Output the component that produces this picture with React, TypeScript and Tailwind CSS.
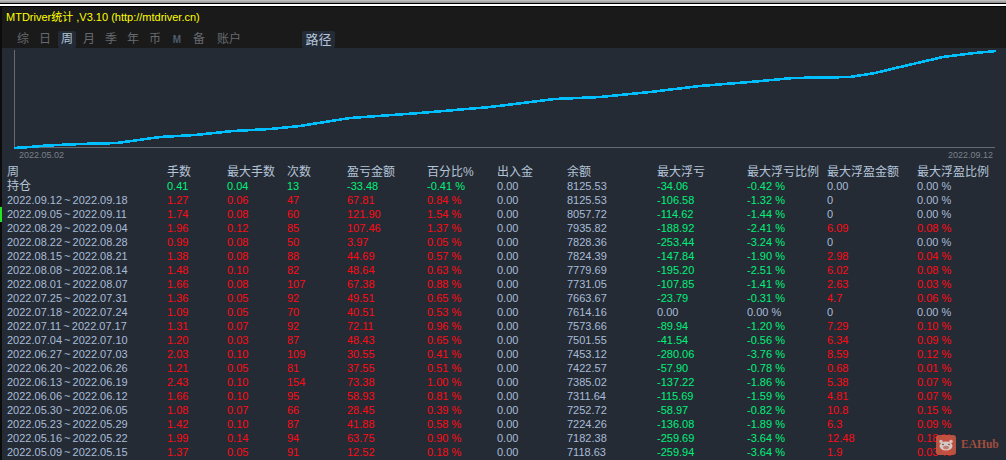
const F = "font-['Liberation_Sans','Noto_Sans_CJK_SC',sans-serif]";

const N = "text-[#a8bcd8]";
const R = "text-[#ff0a14]";
const G = "text-[#00f07a]";

const tabs = ["综", "日", "周", "月", "季", "年", "币", "M", "备"];

const headers = ["周", "手数", "最大手数", "次数", "盈亏金额", "百分比%", "出入金", "余额", "最大浮亏", "最大浮亏比例", "最大浮盈金额", "最大浮盈比例"];

const rows: string[][] = [
  ["2022.09.12 ~ 2022.09.18", "1.27", "0.06", "47", "67.81", "0.84 %", "0.00", "8125.53", "-106.58", "-1.32 %", "0", "0.00 %"],
  ["2022.09.05 ~ 2022.09.11", "1.74", "0.08", "60", "121.90", "1.54 %", "0.00", "8057.72", "-114.62", "-1.44 %", "0", "0.00 %"],
  ["2022.08.29 ~ 2022.09.04", "1.96", "0.12", "85", "107.46", "1.37 %", "0.00", "7935.82", "-188.92", "-2.41 %", "6.09", "0.08 %"],
  ["2022.08.22 ~ 2022.08.28", "0.99", "0.08", "50", "3.97", "0.05 %", "0.00", "7828.36", "-253.44", "-3.24 %", "0", "0.00 %"],
  ["2022.08.15 ~ 2022.08.21", "1.38", "0.08", "88", "44.69", "0.57 %", "0.00", "7824.39", "-147.84", "-1.90 %", "2.98", "0.04 %"],
  ["2022.08.08 ~ 2022.08.14", "1.48", "0.10", "82", "48.64", "0.63 %", "0.00", "7779.69", "-195.20", "-2.51 %", "6.02", "0.08 %"],
  ["2022.08.01 ~ 2022.08.07", "1.66", "0.08", "107", "67.38", "0.88 %", "0.00", "7731.05", "-107.85", "-1.41 %", "2.63", "0.03 %"],
  ["2022.07.25 ~ 2022.07.31", "1.36", "0.05", "92", "49.51", "0.65 %", "0.00", "7663.67", "-23.79", "-0.31 %", "4.7", "0.06 %"],
  ["2022.07.18 ~ 2022.07.24", "1.09", "0.05", "70", "40.51", "0.53 %", "0.00", "7614.16", "0.00", "0.00 %", "0", "0.00 %"],
  ["2022.07.11 ~ 2022.07.17", "1.31", "0.07", "92", "72.11", "0.96 %", "0.00", "7573.66", "-89.94", "-1.20 %", "7.29", "0.10 %"],
  ["2022.07.04 ~ 2022.07.10", "1.20", "0.03", "87", "48.43", "0.65 %", "0.00", "7501.55", "-41.54", "-0.56 %", "6.34", "0.09 %"],
  ["2022.06.27 ~ 2022.07.03", "2.03", "0.10", "109", "30.55", "0.41 %", "0.00", "7453.12", "-280.06", "-3.76 %", "8.59", "0.12 %"],
  ["2022.06.20 ~ 2022.06.26", "1.21", "0.05", "81", "37.55", "0.51 %", "0.00", "7422.57", "-57.90", "-0.78 %", "0.68", "0.01 %"],
  ["2022.06.13 ~ 2022.06.19", "2.43", "0.10", "154", "73.38", "1.00 %", "0.00", "7385.02", "-137.22", "-1.86 %", "5.38", "0.07 %"],
  ["2022.06.06 ~ 2022.06.12", "1.66", "0.10", "95", "58.93", "0.81 %", "0.00", "7311.64", "-115.69", "-1.59 %", "4.81", "0.07 %"],
  ["2022.05.30 ~ 2022.06.05", "1.08", "0.07", "66", "28.45", "0.39 %", "0.00", "7252.72", "-58.97", "-0.82 %", "10.8", "0.15 %"],
  ["2022.05.23 ~ 2022.05.29", "1.42", "0.10", "87", "41.88", "0.58 %", "0.00", "7224.26", "-136.08", "-1.89 %", "6.3", "0.09 %"],
  ["2022.05.16 ~ 2022.05.22", "1.99", "0.14", "94", "63.75", "0.90 %", "0.00", "7182.38", "-259.69", "-3.64 %", "12.48", "0.18 %"],
  ["2022.05.09 ~ 2022.05.15", "1.37", "0.05", "91", "12.52", "0.18 %", "0.00", "7118.63", "-259.94", "-3.64 %", "1.9", "0.03 %"],
];

const GRID = "grid grid-cols-[160px_60px_60px_60px_80px_70px_70px_90px_90px_80px_90px_1fr] pl-[5px] h-[14px] leading-[14px] whitespace-nowrap";

function cellColor(i: number, v: string, open: boolean) {
  if (i === 0) return N;
  if (open && i <= 3) return G;
  if (i >= 1 && i <= 3) return R;
  if (i === 6 || i === 7) return N;
  const n = parseFloat(v);
  if (n === 0) return N;
  return n < 0 ? G : R;
}

function Row({ cells, open }: { cells: string[]; open?: boolean }) {
  return (
    <div className={GRID}>
      {cells.map((c, i) => (
        <div
          key={i}
          className={`${cellColor(i, c, !!open)} ${i === 0 && open ? "text-[12px] text-[#b4c4d8]" : "text-[11px]"} ${i === 0 ? "[word-spacing:-1px]" : ""}`}
        >
          {c}
        </div>
      ))}
    </div>
  );
}

function Chart() {
  const pts = "14,148 30,147 47,145.5 80,144 117,143 160,137 195,135 233,131 270,129 300,126 333,120.7 350,118 420,113 490,107 555,99 600,97 650,92 700,86 750,82 793,78 850,77 875,73 900,67 943,57 970,53.5 996,51";
  return (
    <div className="h-[115px] relative">
      <svg width="1004" height="115" viewBox="2 48 1004 115" className="block">
        <path d="M14.5 50 V147.5 H995" stroke="#666a70" strokeWidth="1" fill="none" shapeRendering="crispEdges" />
        <polyline points={pts} stroke="#00bfff" strokeWidth="2.6" fill="none" shapeRendering="crispEdges" />
      </svg>
      <div className="absolute left-[17px] bottom-[2px] text-[9px] leading-[12px] text-[#7a818b]">2022.05.02</div>
      <div className="absolute right-[13px] bottom-[2px] text-[9px] leading-[12px] text-[#7a818b]">2022.09.12</div>
    </div>
  );
}

function Watermark() {
  return (
    <div className="absolute left-[936px] top-[435px] flex items-center gap-[5px]">
      <svg width="20" height="20" viewBox="0 0 20 20" className="opacity-85">
        <rect width="20" height="20" rx="3" fill="#d05a44" />
        <circle cx="5" cy="6.5" r="1.8" fill="#f3d8d2" />
        <circle cx="15" cy="6.5" r="1.8" fill="#f3d8d2" />
        <ellipse cx="10" cy="11" rx="6.5" ry="4.5" fill="#f3e4e0" />
        <ellipse cx="10" cy="12.5" rx="3" ry="1.8" fill="#d98a7c" />
        <circle cx="7" cy="9.5" r="0.8" fill="#8a3327" />
        <circle cx="13" cy="9.5" r="0.8" fill="#8a3327" />
      </svg>
      <span className="font-['Liberation_Serif',serif] font-bold text-[11.5px] leading-none text-[#a04d3e]">EAHub</span>
    </div>
  );
}

export default function App() {
  return (
    <div className={`${F} relative w-[1006px] h-[460px] overflow-hidden bg-[#252b34]`}>
      <div className="h-[3px] bg-gradient-to-b from-[#c8c8c8] to-[#8a8a8a]" />
      <div className="h-[1px] bg-black" />
      <div className="h-[2px] bg-white" />
      <div className="h-[1px] bg-black" />
      <div className="flex h-[453px]">
        <div className="w-[2px] shrink-0 bg-[#0c0c0c]" />
        <div className="flex-1 min-w-0">
          <div className="h-[41px] bg-[#1a1a1a]">
            <div className="h-[24px] pl-[4px] pt-[2px] text-[11px] leading-[16px] text-[#ffff00] whitespace-nowrap">
              MTDriver统计 ,V3.10 (http://mtdriver.cn)
            </div>
            <div className="flex h-[17px] pl-[10px] text-[12px] leading-[17px] text-[#666a70]">
              {tabs.map((t) => (
                <div key={t} className="w-[22px] h-[17px] flex justify-center">
                  <div
                    className={`w-[18px] h-[17px] text-center rounded-[2px] ${t === "周" ? "bg-[#232b36] text-[#b4c4d8]" : ""} ${t === "M" ? "text-[10px] font-bold text-[#4f5c6c]" : ""}`}
                  >
                    {t}
                  </div>
                </div>
              ))}
              <div className="w-[38px] text-center">账户</div>
              <div className="ml-[54px] w-[33px] h-[17px] text-center text-[13px] rounded-[2px] bg-[#232b36] text-[#b4c4d8]">路径</div>
            </div>
          </div>
          <Chart />
          <div className="pt-[2px]">
            <div className={`${GRID} text-[12px] text-[#b4c4d8]`}>
              {headers.map((h) => (
                <div key={h} className="text-[#b4c4d8]">{h}</div>
              ))}
            </div>
            <Row open cells={["持仓", "0.41", "0.04", "13", "-33.48", "-0.41 %", "0.00", "8125.53", "-34.06", "-0.42 %", "0.00", "0.00 %"]} />
            {rows.map((r) => (
              <Row key={r[0]} cells={r} />
            ))}
          </div>
        </div>
      </div>
      <div className="absolute left-0 top-[207px] w-[2px] h-[15px] bg-[#22e622]" />
      <Watermark />
    </div>
  );
}
